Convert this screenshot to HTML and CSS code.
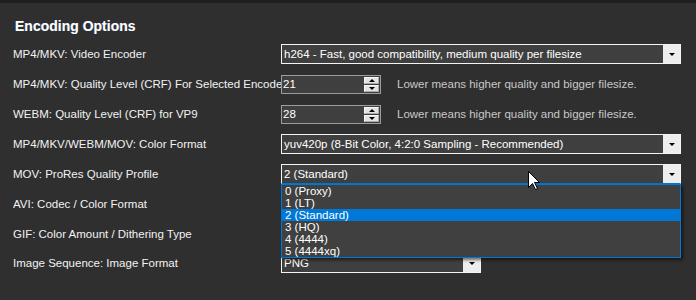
FILE: index.html
```html
<!DOCTYPE html>
<html>
<head>
<meta charset="utf-8">
<link rel="stylesheet" href="styles.css">
</head>
<body>
<div class="topbar"></div>
<section class="panel">
  <h2 class="title">Encoding Options</h2>
  <div class="rows">
    <div class="row">
      <span class="label">MP4/MKV: Video Encoder</span>
      <div class="select w400"><span class="value">h264 - Fast, good compatibility, medium quality per filesize</span><span class="btn"><i class="tri"></i></span></div>
    </div>
    <div class="row">
      <span class="label">MP4/MKV: Quality Level (CRF) For Selected Encoder</span>
      <div class="ctl">
        <div class="spin"><span class="value">21</span><span class="spinbtns"><span class="sb"><i class="up"></i></span><span class="sb"><i class="tri"></i></span></span></div>
        <span class="hint">Lower means higher quality and bigger filesize.</span>
      </div>
    </div>
    <div class="row">
      <span class="label">WEBM: Quality Level (CRF) for VP9</span>
      <div class="ctl">
        <div class="spin"><span class="value">28</span><span class="spinbtns"><span class="sb"><i class="up"></i></span><span class="sb"><i class="tri"></i></span></span></div>
        <span class="hint">Lower means higher quality and bigger filesize.</span>
      </div>
    </div>
    <div class="row">
      <span class="label">MP4/MKV/WEBM/MOV: Color Format</span>
      <div class="select w400"><span class="value">yuv420p (8-Bit Color, 4:2:0 Sampling - Recommended)</span><span class="btn"><i class="tri"></i></span></div>
    </div>
    <div class="row">
      <span class="label">MOV: ProRes Quality Profile</span>
      <div class="select w400 open"><span class="value">2 (Standard)</span><span class="btn"><i class="tri"></i></span>
        <ul class="list">
          <li>0 (Proxy)</li>
          <li>1 (LT)</li>
          <li class="sel">2 (Standard)</li>
          <li>3 (HQ)</li>
          <li>4 (4444)</li>
          <li>5 (4444xq)</li>
        </ul>
      </div>
    </div>
    <div class="row">
      <span class="label">AVI: Codec / Color Format</span>
      <div class="select w400"><span class="value"></span><span class="btn"><i class="tri"></i></span></div>
    </div>
    <div class="row">
      <span class="label">GIF: Color Amount / Dithering Type</span>
      <div class="select w400"><span class="value"></span><span class="btn"><i class="tri"></i></span></div>
    </div>
    <div class="row last">
      <span class="label">Image Sequence: Image Format</span>
      <div class="select w200"><span class="value">PNG</span><span class="btn"><i class="tri"></i></span></div>
    </div>
  </div>
</section>
<svg class="cursor" width="13" height="20" viewBox="0 0 13 20"><path d="M0.5 0.5 V16.5 L4.5 12.5 L7.5 18.5 L9.5 17.5 L6.5 11.5 H11.5 Z" fill="#fff" stroke="#000" stroke-width="1" stroke-linejoin="miter"/></svg>
</body>
</html>
```

FILE: styles.css
```css
html, body {
  margin: 0;
  padding: 0;
}
body {
  width: 696px;
  height: 300px;
  overflow: hidden;
  background: #2f2f2f;
  font-family: "Liberation Sans", Arial, sans-serif;
  font-size: 11.5px;
  color: #f0f0f0;
  position: relative;
}
.topbar {
  height: 3px;
  background: #1e1e1e;
}
.panel {
  padding: 0 0 0 13px;
}
.title {
  margin: 15px 0 0 2px;
  font-size: 14px;
  line-height: 16px;
  font-weight: bold;
  color: #ffffff;
  text-shadow: -0.6px 0 0 rgba(120, 170, 255, 0.45);
}
.rows {
  margin-top: 5px;
  display: flex;
  flex-direction: column;
}
.row {
  height: 30px;
  display: grid;
  grid-template-columns: 268px auto;
  align-items: center;
}
.row.last {
  margin-top: -1px;
}
.label {
  white-space: nowrap;
  overflow: hidden;
  line-height: 30px;
  color: #f2f2f2;
}
.ctl {
  display: flex;
  align-items: center;
  position: relative;
  z-index: 1;
}
.select {
  position: relative;
  z-index: 1;
  height: 20px;
  box-sizing: border-box;
  border: 1px solid #f4f4f4;
  background: #3f3f3f;
  display: flex;
  align-items: stretch;
}
.w400 { width: 400px; }
.w200 { width: 200px; }
.select .value {
  flex: 1;
  padding-left: 2px;
  line-height: 18px;
  white-space: nowrap;
  overflow: hidden;
  color: #ffffff;
}
.btn {
  width: 17px;
  background: #ededed;
  display: flex;
  align-items: center;
  justify-content: center;
}
.tri {
  width: 0;
  height: 0;
  border-left: 3px solid transparent;
  border-right: 3px solid transparent;
  border-top: 3px solid #000;
  margin-top: 1px;
}
.up {
  width: 0;
  height: 0;
  border-left: 3px solid transparent;
  border-right: 3px solid transparent;
  border-bottom: 3px solid #000;
}
.spin {
  width: 100px;
  height: 19px;
  margin-top: 1px;
  box-sizing: border-box;
  border: 1px solid #9c9c9c;
  background: #3f3f3f;
  display: flex;
}
.spin .value {
  flex: 1;
  padding-left: 1px;
  line-height: 17px;
  color: #ffffff;
}
.spinbtns {
  width: 16px;
  display: flex;
  flex-direction: column;
  padding: 1px 1px 1px 0;
  gap: 1px;
  box-sizing: border-box;
}
.sb {
  flex: 1;
  background: #e4e4e4;
  border: 1px solid #f8f8f8;
  border-right-color: #a8a8a8;
  border-bottom-color: #a8a8a8;
  display: flex;
  align-items: center;
  justify-content: center;
}
.sb .tri { margin-top: 0; }
.hint {
  margin-left: 16px;
  color: #c8c8c8;
  white-space: nowrap;
}
.open {
  z-index: 5;
  border-bottom-color: #0078d7;
}
.list {
  position: absolute;
  left: -1px;
  top: 19px;
  width: 400px;
  margin: 0;
  padding: 0;
  list-style: none;
  box-sizing: border-box;
  border: 1px solid #0078d7;
  background: #404040;
  box-shadow: 2px 2px 3px rgba(0, 0, 0, 0.55);
}
.list li {
  height: 12px;
  line-height: 12px;
  padding-left: 3px;
  color: #ffffff;
  white-space: nowrap;
}
.list li.sel {
  background: #0078d7;
}
.cursor {
  position: absolute;
  left: 528px;
  top: 171px;
  z-index: 10;
}
```
